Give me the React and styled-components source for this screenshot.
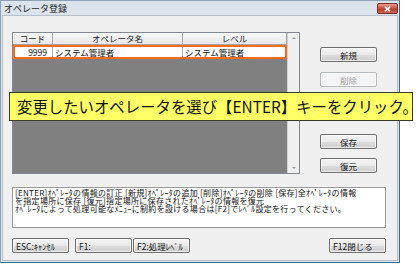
import React from "react";
import styled, { createGlobalStyle } from "styled-components";

const Global = createGlobalStyle`
  html, body { margin: 0; padding: 0; background: #ffffff; }
  body { font-family: "Noto Sans CJK JP", "Noto Sans", sans-serif; }
  * { box-sizing: border-box; }
`;

const Stage = styled.div`
  position: relative;
  width: 419px;
  height: 267px;
`;

const Window = styled.div`
  width: 400px;
  height: 263px;
  border: 1px solid #3f6b86;
  border-top-color: #8ea2b4;
  border-left-color: #8ea2b4;
  background: #dbe4ed;
  display: flex;
  flex-direction: column;
`;

const TitleBar = styled.div`
  height: 14px;
  display: flex;
  align-items: center;
  justify-content: space-between;
  padding: 0 1px 0 3px;
`;

const Title = styled.span`
  font-size: 9px;
  line-height: 9px;
  color: #1e1e1e;
`;

const CloseBtn = styled.div`
  width: 21px;
  height: 11px;
  margin-top: 1px;
  border: 1px solid #7a2f26;
  border-radius: 2px;
  background: linear-gradient(#e9a196, #c7493a 50%, #b5321f 51%, #d0685a);
  display: flex;
  align-items: center;
  justify-content: center;
`;

const Content = styled.div`
  flex: 1;
  margin: 0 1px 1px 1px;
  background: #f0f0f0;
  border: 1px solid #b5c0cb;
  padding: 16px 0 0 9px;
  display: flex;
  flex-direction: column;
`;

const TopArea = styled.div`
  display: flex;
  gap: 20px;
`;

const GridPanel = styled.div`
  width: 288px;
  height: 142px;
  border: 1px solid #828790;
  display: flex;
`;

const GridBody = styled.div`
  flex: 1;
  background: #808080;
  display: flex;
  flex-direction: column;
`;

const HeaderRow = styled.div`
  display: flex;
  height: 12px;
  background: linear-gradient(#f7f7f7, #e9e9e9);
  border-bottom: 1px solid #a5a5a5;
`;

const HeadCell = styled.div`
  width: ${(p) => p.$w}px;
  flex: ${(p) => (p.$grow ? 1 : "none")};
  border-right: 1px solid #a5a5a5;
  font-size: 8.5px;
  line-height: 11px;
  text-align: center;
  color: #222;
`;

const DataRow = styled.div`
  display: flex;
  height: 14px;
  background: #ffffff;
  border: 2px solid #ff6a1a;
`;

const Cell = styled.div`
  width: ${(p) => p.$w}px;
  flex: ${(p) => (p.$grow ? 1 : "none")};
  border-right: ${(p) => (p.$last ? "none" : "1px solid #b0b0b0")};
  font-size: 8.5px;
  line-height: 10px;
  color: #111;
  text-align: ${(p) => (p.$right ? "right" : "left")};
  padding: ${(p) => (p.$right ? "0 5px 0 0" : "0 0 0 2px")};
  white-space: nowrap;
  overflow: hidden;
`;

const ScrollBar = styled.div`
  width: 12px;
  background: #f0f0f0;
  border-left: 1px solid #d0d0d0;
  display: flex;
  flex-direction: column;
  justify-content: space-between;
  align-items: center;
  padding: 4px 0;
`;

const Arrow = styled.div`
  width: 0;
  height: 0;
  border-left: 2px solid transparent;
  border-right: 2px solid transparent;
  ${(p) =>
    p.$down
      ? "border-top: 2px solid #a0a0a0;"
      : "border-bottom: 2px solid #a0a0a0;"}
`;

const ButtonCol = styled.div`
  display: flex;
  flex-direction: column;
  padding-top: 15px;
`;

const Btn = styled.button`
  width: 57px;
  height: 15px;
  margin: ${(p) => `${p.$mt || 0}px ${p.$mr || 0}px 0 ${p.$ml || 0}px`};
  padding: ${(p) => (p.$left ? "0 0 0 3px" : "0")};
  border: 1px solid ${(p) => (p.$disabled ? "#b5b9bc" : "#707070")};
  border-radius: 2px;
  background: ${(p) =>
    p.$disabled
      ? "#f4f4f4"
      : "linear-gradient(#f3f3f3, #ebebeb 50%, #dddddd 51%, #cfcfcf)"};
  font-family: "Noto Sans CJK JP", "Noto Sans", sans-serif;
  font-size: 8.5px;
  line-height: 12px;
  color: ${(p) => (p.$disabled ? "#a3a3a3" : "#1a1a1a")};
  text-align: ${(p) => (p.$left ? "left" : "center")};
  white-space: nowrap;
  display: block;
  box-shadow: inset 0 0 0 1px rgba(255, 255, 255, 0.6);
`;

const Desc = styled.div`
  width: 374px;
  height: 41px;
  margin-top: 13px;
  background: #ffffff;
  border: 1px solid #9a9a9a;
  padding: 1px 2px;
  font-size: 8px;
  letter-spacing: 0.3px;
  color: #111;
  white-space: nowrap;
  overflow: hidden;
`;

const DescLine = styled.div`
  height: 8px;
  line-height: 8px;
`;

const BottomRow = styled.div`
  display: flex;
  margin-top: 10px;
`;

const Spacer = styled.div`
  flex: 1;
`;

const Banner = styled.div`
  position: absolute;
  left: 9px;
  top: 92px;
  width: 404px;
  height: 29px;
  background: #ffff66;
  border: 1px solid #3a3a2a;
  padding-left: 7px;
  font-size: 15.4px;
  line-height: 27px;
  color: #111;
  white-space: nowrap;
`;

export default function App() {
  return (
    <Stage>
      <Global />
      <Window>
        <TitleBar>
          <Title>オペレータ登録</Title>
          <CloseBtn>
            <svg width="7" height="6" viewBox="0 0 7 6">
              <path d="M1 0.8 L6 5.2 M6 0.8 L1 5.2" stroke="#ffffff" strokeWidth="1.6" />
            </svg>
          </CloseBtn>
        </TitleBar>
        <Content>
          <TopArea>
            <GridPanel>
              <GridBody>
                <HeaderRow>
                  <HeadCell $w={40}>コード</HeadCell>
                  <HeadCell $w={130}>オペレータ名</HeadCell>
                  <HeadCell $grow>レベル</HeadCell>
                </HeaderRow>
                <DataRow>
                  <Cell $w={38} $right>9999</Cell>
                  <Cell $w={130}>システム管理者</Cell>
                  <Cell $grow $last>システム管理者</Cell>
                </DataRow>
              </GridBody>
              <ScrollBar>
                <Arrow />
                <Arrow $down />
              </ScrollBar>
            </GridPanel>
            <ButtonCol>
              <Btn>新規</Btn>
              <Btn $mt={10} $disabled>削除</Btn>
              <Btn $mt={47}>保存</Btn>
              <Btn $mt={9}>復元</Btn>
            </ButtonCol>
          </TopArea>
          <Desc>
            <DescLine>[ENTER]ｵﾍﾟﾚｰﾀの情報の訂正 [新規]ｵﾍﾟﾚｰﾀの追加 [削除]ｵﾍﾟﾚｰﾀの削除 [保存]全ｵﾍﾟﾚｰﾀの情報</DescLine>
            <DescLine>を指定場所に保存 [復元]指定場所に保存されたｵﾍﾟﾚｰﾀの情報を復元</DescLine>
            <DescLine>ｵﾍﾟﾚｰﾀによって処理可能なﾒﾆｭｰに制約を設ける場合は[F2]でﾚﾍﾞﾙ設定を行ってください。</DescLine>
          </Desc>
          <BottomRow>
            <Btn $left>ESC:ｷｬﾝｾﾙ</Btn>
            <Btn $left $ml={6}>F1:</Btn>
            <Btn $left $ml={1}>F2:処理ﾚﾍﾞﾙ</Btn>
            <Spacer />
            <Btn $left $mr={11}>F12閉じる</Btn>
          </BottomRow>
        </Content>
      </Window>
      <Banner>変更したいオペレータを選び【ENTER】キーをクリック。</Banner>
    </Stage>
  );
}
